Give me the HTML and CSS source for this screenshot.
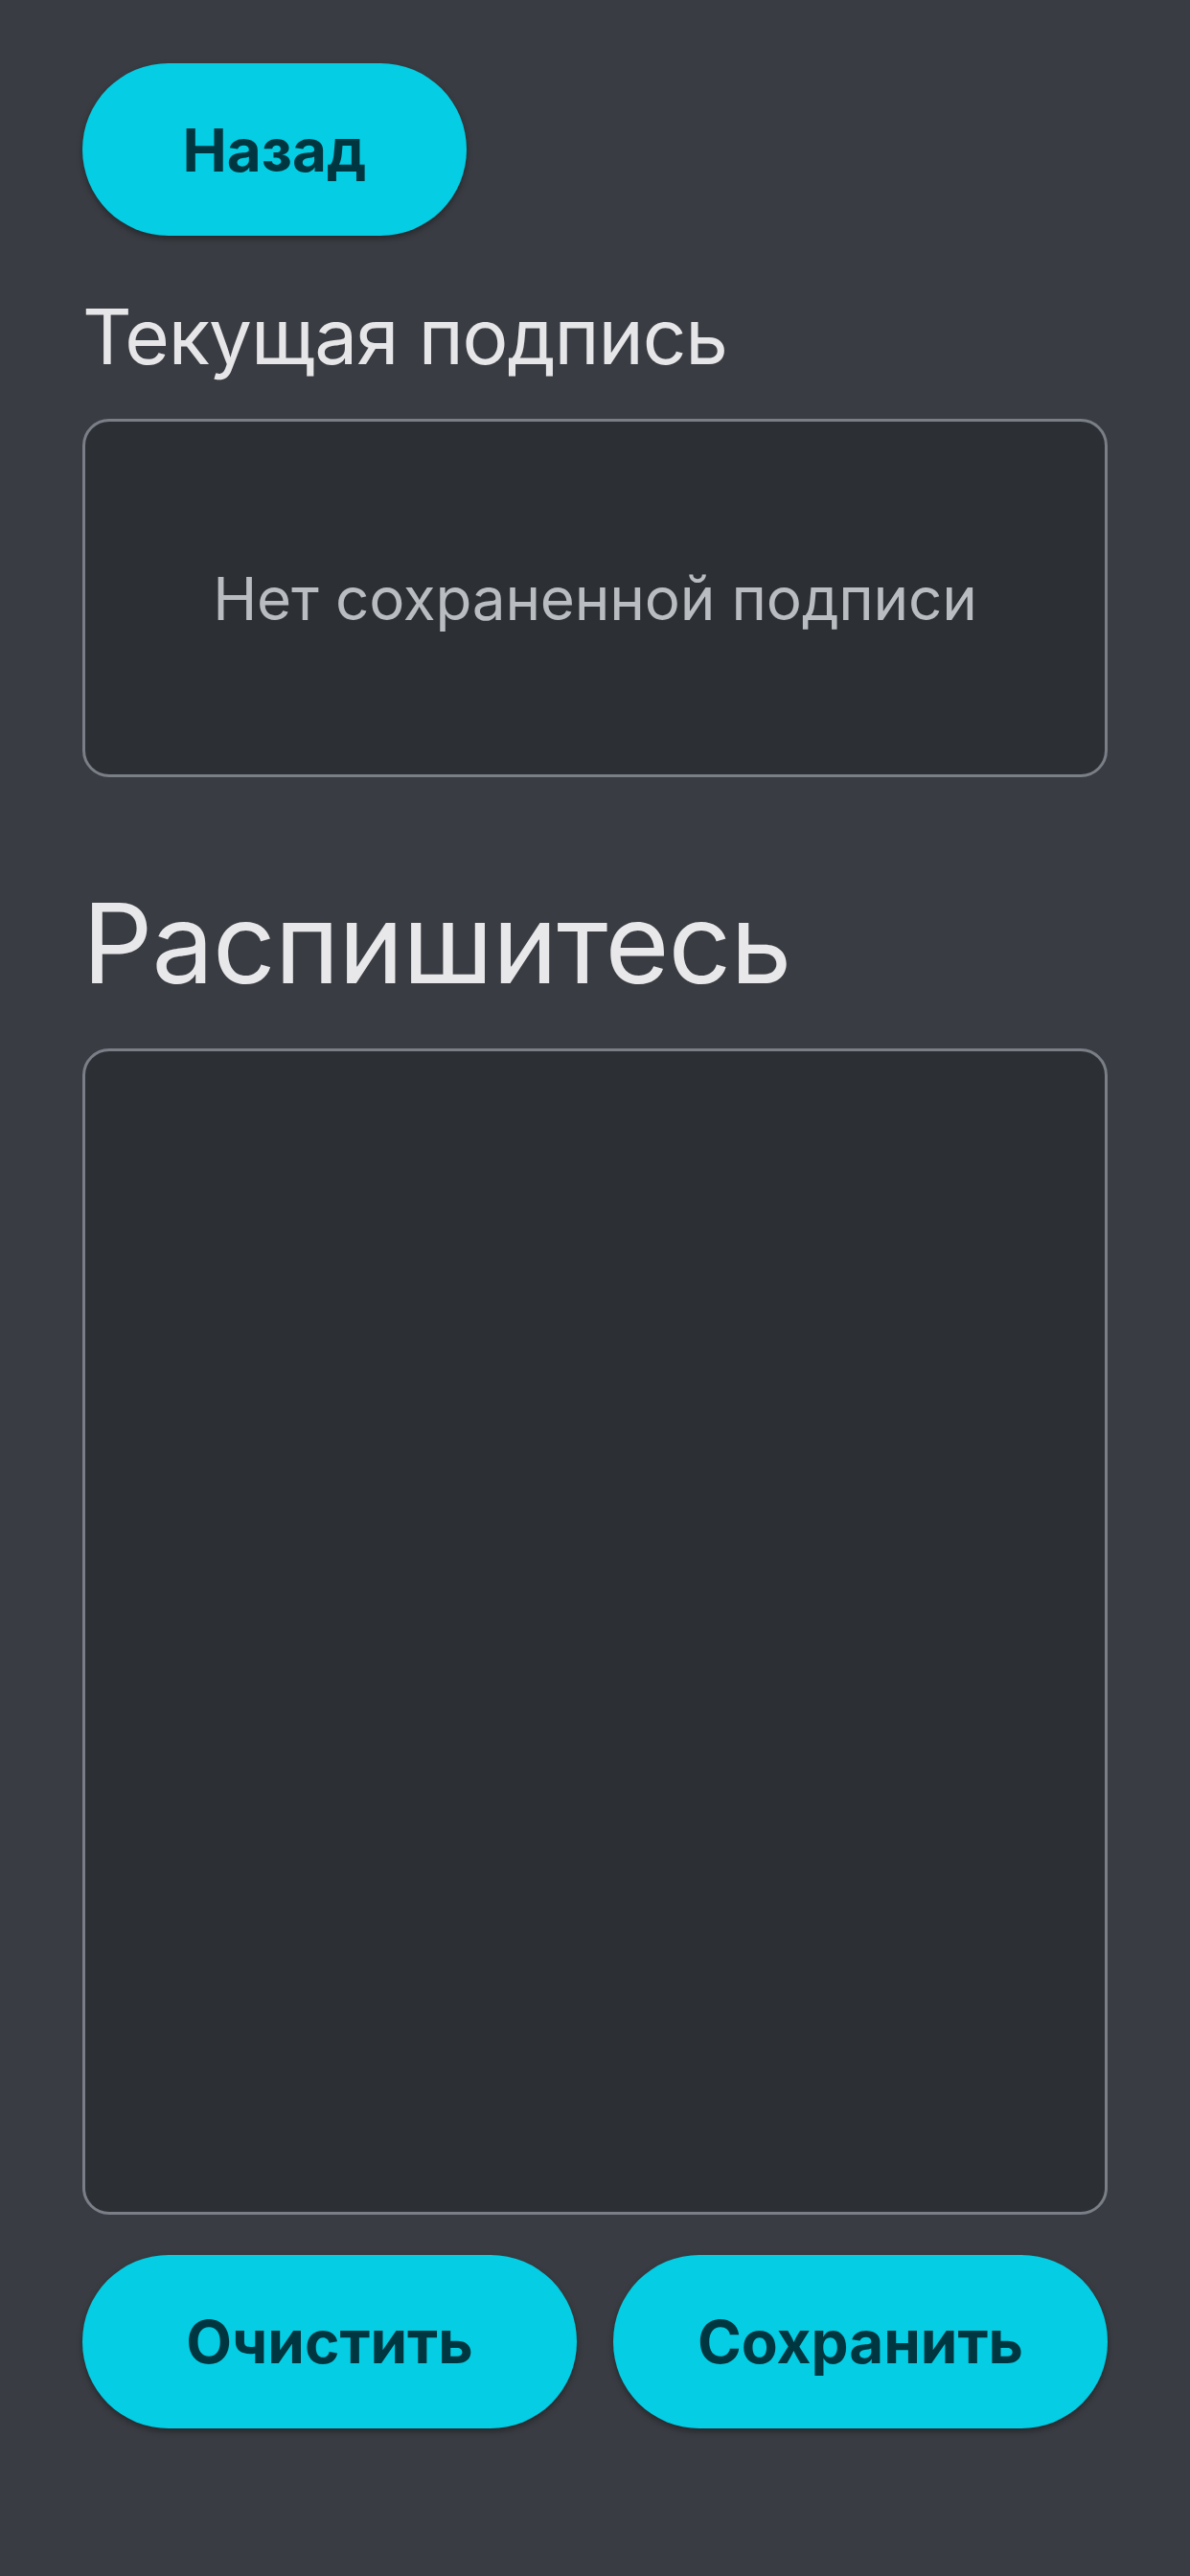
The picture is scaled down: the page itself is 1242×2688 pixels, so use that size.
FILE: index.html
```html
<!DOCTYPE html>
<html lang="ru">
<head>
<meta charset="utf-8">
<title>Подпись</title>
<link rel="stylesheet" href="styles.css">
</head>
<body>
<main class="screen">
  <div class="top-row">
    <button class="pill back">Назад</button>
  </div>
  <h2 class="section-title">Текущая подпись</h2>
  <div class="current-box">
    <span class="empty-text">Нет сохраненной подписи</span>
  </div>
  <h1 class="sign-title">Распишитесь</h1>
  <div class="pad"></div>
  <div class="actions">
    <button class="pill">Очистить</button>
    <button class="pill">Сохранить</button>
  </div>
</main>
</body>
</html>
```

FILE: styles.css
```css
html, body {
  margin: 0;
  padding: 0;
  background: #393c42;
}
body {
  width: 1242px;
  height: 2688px;
  font-family: Inter, "Noto Sans", sans-serif;
}
.screen {
  box-sizing: border-box;
  padding: 66px 86px 0 86px;
  display: flex;
  flex-direction: column;
}
.top-row {
  display: flex;
}
.pill {
  border: none;
  background: #04cde4;
  color: #00363f;
  font-family: Inter, "Noto Sans", sans-serif;
  font-weight: 700;
  font-size: 62px;
  height: 180px;
  border-radius: 90px;
  box-shadow: 0 3px 6px rgba(0, 0, 0, 0.35);
  padding: 0;
  cursor: pointer;
}
.back {
  width: 401px;
}
.section-title {
  margin: 57px 0 0 0;
  font-size: 80px;
  line-height: 96px;
  font-weight: 400;
  letter-spacing: -1.1px;
  color: #e6e6e8;
}
.current-box {
  margin-top: 38px;
  height: 374px;
  box-sizing: border-box;
  border: 3px solid #7a7e86;
  border-radius: 28px;
  background: #2c2f34;
  display: flex;
  align-items: center;
  justify-content: center;
}
.empty-text {
  font-size: 62px;
  color: #b9bcc1;
  letter-spacing: -0.2px;
}
.sign-title {
  margin: 105px 0 0 0;
  font-size: 115px;
  line-height: 138px;
  font-weight: 400;
  letter-spacing: -1px;
  color: #e8e8ea;
}
.pad {
  margin-top: 40px;
  height: 1217px;
  box-sizing: border-box;
  border: 3px solid #7a7e86;
  border-radius: 28px;
  background: #2c2f34;
}
.actions {
  margin-top: 42px;
  display: grid;
  grid-template-columns: 1fr 1fr;
  column-gap: 38px;
}
.actions .pill {
  height: 181px;
}
```
